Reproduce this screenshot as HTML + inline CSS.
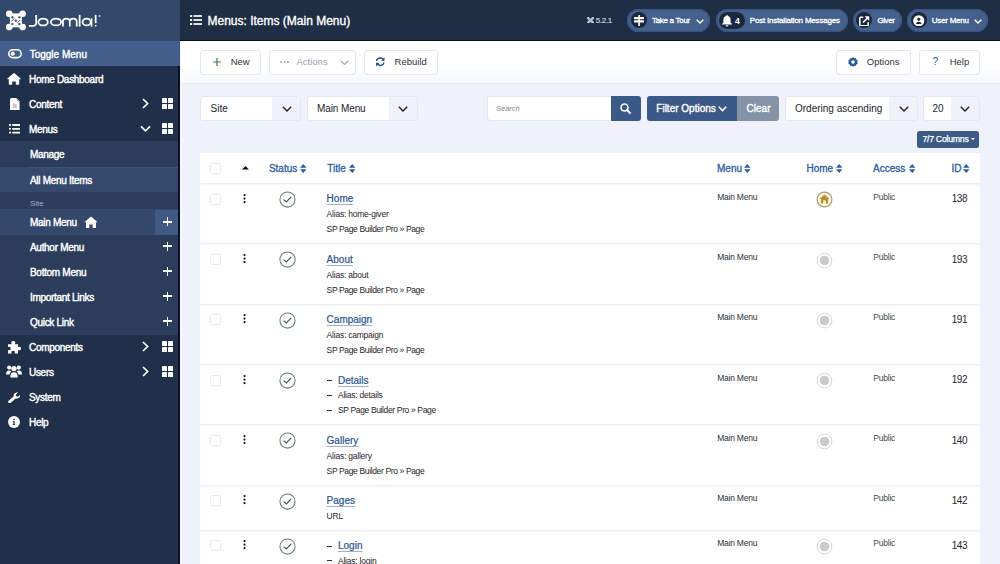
<!DOCTYPE html>
<html><head><meta charset="utf-8">
<style>
*{box-sizing:border-box;margin:0;padding:0}
html,body{width:1000px;height:564px;overflow:hidden;background:#eff2fb;font-family:"Liberation Sans",sans-serif;position:relative}
.abs{position:absolute}
.tx{position:absolute;white-space:nowrap;line-height:1}
#side{position:absolute;left:0;top:0;width:180px;height:564px;background:#21304a}
#sideborder{position:absolute;left:178px;top:66px;width:2px;height:498px;background:#0b1226}
#logo{position:absolute;left:0;top:0;width:180px;height:41px;background:#33496b}
#hdr{position:absolute;left:180px;top:0;width:820px;height:41px;background:#1f2d45;border-bottom:1px solid #0a101c}
.st{position:absolute;left:29px;white-space:nowrap;line-height:1;font-size:10px;letter-spacing:-0.3px;color:#fff;-webkit-text-stroke:0.4px #fff}
.plus{position:absolute;left:163px;width:9px;height:9px;margin-top:0.5px}
.plus:before,.plus:after{content:"";position:absolute;background:#fff}
.plus:before{left:3.6px;top:0;width:1.9px;height:9px}
.plus:after{left:0;top:3.6px;width:9px;height:1.9px}
.grid{position:absolute;left:162px;width:11px;height:11px}
.grid i{position:absolute;width:5px;height:5px;background:#fff;border-radius:.6px}
.chev{position:absolute;left:142px}
.btn{position:absolute;top:49.5px;height:25px;background:#fff;border:1px solid #e4e8ef;border-radius:3px}
.sel{position:absolute;top:96px;height:25px;background:#fff;border:1px solid #e3e7ef;border-radius:3px}
.sel .ar{position:absolute;right:0;top:0;bottom:0;width:28px;background:#eff2f9;border-radius:0 3px 3px 0}
.pill{position:absolute;top:9.3px;height:22.5px;border-radius:12px;background:#44608c;box-shadow:inset 0 0 0 1.2px #3a5480}
.pic{position:absolute;top:3.1px;left:3.5px;width:16px;height:16px;border-radius:50%;background:#1b273d}
.th{position:absolute;margin-top:0.7px;white-space:nowrap;line-height:1;font-size:10px;color:#2b5c9f;-webkit-text-stroke:0.3px #2b5c9f}
.cb{position:absolute;left:209.6px;width:11px;height:11px;border:1px solid #ebecef;border-radius:2px;background:#fff;margin-top:-0.4px}
.dot{position:absolute;left:0;width:2.2px;height:2.2px;background:#111;border-radius:50%}
.dash{width:5px;height:1.2px;background:#333}
</style></head><body>

<div id="side">
  <div id="logo">
    <svg class="abs" style="left:0;top:0" width="180" height="41" viewBox="0 0 180 41">
      <path d="M9 12.5 Q15.9 14.5 22.8 12.5 Q20.8 20.4 22.8 28.3 Q15.9 26.3 9 28.3 Q11 20.4 9 12.5 Z" fill="#fff"/>
      <g fill="#fff"><circle cx="9.2" cy="13.7" r="3.3"/><circle cx="22.6" cy="13.7" r="3.3"/><circle cx="9.2" cy="27.1" r="3.3"/><circle cx="22.6" cy="27.1" r="3.3"/></g>
      <g fill="#34496b"><ellipse cx="12.4" cy="17.3" rx="1.3" ry="1.1" transform="rotate(45 12.4 17.3)"/><ellipse cx="19.3" cy="17.3" rx="1.3" ry="1.1"/><ellipse cx="15.8" cy="20.6" rx="1.2" ry="1.2"/><ellipse cx="12.4" cy="24" rx="1.3" ry="1.1"/><ellipse cx="19.3" cy="24" rx="1.3" ry="1.1"/></g>
      <g fill="none" stroke="#34496b" stroke-width="0.7"><path d="M11.5 21.5 L14.8 18.2 M16.9 23.2 L20.2 19.9"/></g>
      <g fill="none" stroke="#fff" stroke-width="1.75" stroke-linecap="butt">
        <path d="M36.2 14.9 L36.2 22.4 Q36.2 25.9 32.7 25.9 L28.9 25.9"/>
        <ellipse cx="43.1" cy="22" rx="4.75" ry="3.45"/>
        <ellipse cx="56" cy="22" rx="5.1" ry="3.45"/>
        <path d="M62.9 26.6 L62.9 21.2 Q62.9 18.55 66.3 18.55 Q69.8 18.55 69.8 21.2 L69.8 26.6 M69.8 21.2 Q69.8 18.55 73.2 18.55 Q76.7 18.55 76.7 21.2 L76.7 26.6"/>
        <path d="M79.65 14.9 L79.65 26.6"/>
        <ellipse cx="86.6" cy="22" rx="4.1" ry="3.45"/>
        <path d="M91.5 18.2 L91.5 26.6"/>
        <path d="M95.65 14.9 L95.65 23.2"/>
      </g>
      <circle cx="95.65" cy="25.6" r="0.95" fill="#fff"/>
      <circle cx="99.6" cy="16" r="1.05" fill="#b9c4d6"/>
    </svg>
  </div>
  </div>

  <div class="abs" style="left:0;top:41px;width:179.5px;height:25px;background:#445f8b;border-right:1px solid #3b5581"></div>
  <svg class="abs" style="left:7.6px;top:49.2px" width="14" height="9.4" viewBox="0 0 14 9.4"><rect x="0.8" y="0.8" width="12.4" height="7.8" rx="3.9" fill="none" stroke="#fff" stroke-width="1.6"/><circle cx="4.7" cy="4.7" r="2.1" fill="#fff"/></svg>
  <div class="st" style="left:29.7px;top:49.70px;letter-spacing:0">Toggle Menu</div>

  <svg class="abs" style="left:7.4px;top:72.6px" width="14" height="12" viewBox="0 0 14 12"><path d="M7 0.2 Q7.4 0.2 7.8 0.6 L13.6 5.6 Q14 6.2 13.4 6.3 L12.2 6.3 L12.2 11 Q12.2 11.8 11.4 11.8 L8.8 11.8 L8.8 8.4 L5.2 8.4 L5.2 11.8 L2.6 11.8 Q1.8 11.8 1.8 11 L1.8 6.3 L0.6 6.3 Q0 6.2 0.4 5.6 L6.2 0.6 Q6.6 0.2 7 0.2 Z" fill="#fff"/></svg>
  <div class="st" style="top:74.80px">Home Dashboard</div>

  <svg class="abs" style="left:10px;top:97.6px" width="9.6" height="12.8" viewBox="0 0 9.6 12.8"><path d="M0 1.6 Q0 0 1.6 0 L6.4 0 L9.6 3.2 L9.6 11.2 Q9.6 12.8 8 12.8 L1.6 12.8 Q0 12.8 0 11.2 Z" fill="#fff"/><path d="M6.6 0.4 Q6.8 3 9.2 3.1" fill="none" stroke="#8d97a6" stroke-width="0.8"/><rect x="2.6" y="5.6" width="4.2" height="4.6" fill="#c5c9d0"/></svg>
  <div class="st" style="top:100.00px">Content</div>
  <svg class="chev" style="top:97.5px" width="7" height="11" viewBox="0 0 7 11"><path d="M1 1 L5.6 5.5 L1 10" fill="none" stroke="#fff" stroke-width="1.7"/></svg>
  <div class="grid" style="top:97.5px"><i style="left:0;top:0"></i><i style="left:6px;top:0"></i><i style="left:0;top:6px"></i><i style="left:6px;top:6px"></i></div>

  <svg class="abs" style="left:8.8px;top:124px" width="11.2" height="9.6" viewBox="0 0 11.2 9.6"><g fill="#fff"><circle cx="1" cy="1" r="1.05"/><circle cx="1" cy="4.8" r="1.05"/><circle cx="1" cy="8.6" r="1.05"/><rect x="3.2" y="0.1" width="8" height="1.8" rx=".5"/><rect x="3.2" y="3.9" width="8" height="1.8" rx=".5"/><rect x="3.2" y="7.7" width="8" height="1.8" rx=".5"/></g></svg>
  <div class="st" style="top:125.00px">Menus</div>
  <svg class="abs" style="left:139.5px;top:124.5px" width="11" height="8" viewBox="0 0 11 8"><path d="M1 1.3 L5.5 5.8 L10 1.3" fill="none" stroke="#fff" stroke-width="1.7"/></svg>
  <div class="grid" style="top:122.5px"><i style="left:0;top:0"></i><i style="left:6px;top:0"></i><i style="left:0;top:6px"></i><i style="left:6px;top:6px"></i></div>

  <div class="abs" style="left:0;top:141px;width:180px;height:194px;background:#2b3d5b"></div>
  <div class="st" style="left:30px;top:149.70px">Manage</div>
  <div class="abs" style="left:0;top:166.5px;width:180px;height:25.5px;background:#34496c"></div>
  <div class="abs" style="left:29px;top:166.5px;width:151px;height:1px;background:#3f5578"></div>
  <div class="st" style="left:30px;top:175.50px">All Menu Items</div>
  <div class="tx" style="left:30px;top:199.7px;font-size:8px;color:#a3aec2">Site</div>
  <div class="abs" style="left:0;top:209px;width:180px;height:25.7px;background:#33486b"></div>
  <div class="st" style="left:30px;top:217.60px">Main Menu</div>
  <svg class="abs" style="left:84px;top:215.5px" width="14" height="12.5" viewBox="0 0 15 13"><path d="M7.5 0.3 L14.7 6.6 L12.8 6.6 L12.8 12.7 L9.3 12.7 L9.3 8.8 L5.7 8.8 L5.7 12.7 L2.2 12.7 L2.2 6.6 L0.3 6.6 Z" fill="#fff"/></svg>
  <div class="abs" style="left:154.6px;top:209.5px;width:24px;height:25px;background:#405a84"></div>
  <div class="plus" style="top:216.6px"></div>
  <div class="st" style="left:30px;top:242.70px">Author Menu</div><div class="plus" style="top:241.3px"></div>
  <div class="st" style="left:30px;top:267.70px">Bottom Menu</div><div class="plus" style="top:266.3px"></div>
  <div class="st" style="left:30px;top:292.70px">Important Links</div><div class="plus" style="top:291.3px"></div>
  <div class="st" style="left:30px;top:317.70px">Quick Link</div><div class="plus" style="top:316.3px"></div>

  <svg class="abs" style="left:7px;top:340px" width="14" height="14" viewBox="0 0 14 14"><path d="M1 4.2 L4.6 4.2 Q3.6 1 6.3 1 Q9 1 8 4.2 L11 4.2 L11 7 Q14 6 14 8.5 Q14 11 11 10 L11 13.5 L7.6 13.5 Q8.6 10.8 6.1 10.8 Q3.6 10.8 4.6 13.5 L1 13.5 L1 10 Q3.8 11 3.8 8.5 Q3.8 6 1 7 Z" fill="#fff"/></svg>
  <div class="st" style="top:342.70px">Components</div>
  <svg class="chev" style="top:340.5px" width="7" height="11" viewBox="0 0 7 11"><path d="M1 1 L5.6 5.5 L1 10" fill="none" stroke="#fff" stroke-width="1.7"/></svg>
  <div class="grid" style="top:340.5px"><i style="left:0;top:0"></i><i style="left:6px;top:0"></i><i style="left:0;top:6px"></i><i style="left:6px;top:6px"></i></div>

  <svg class="abs" style="left:6px;top:365px" width="16" height="13" viewBox="0 0 16 13"><g fill="#fff"><circle cx="3.2" cy="2.6" r="2.1"/><circle cx="12.8" cy="2.6" r="2.1"/><circle cx="8" cy="3.6" r="2.7"/><path d="M0 9.5 Q0 5.6 3.2 5.6 Q4.6 5.6 5.2 6.4 Q3.6 7.6 3.6 9.5 Z"/><path d="M16 9.5 Q16 5.6 12.8 5.6 Q11.4 5.6 10.8 6.4 Q12.4 7.6 12.4 9.5 Z"/><path d="M4.2 12.5 Q4.2 7.2 8 7.2 Q11.8 7.2 11.8 12.5 Z"/></g></svg>
  <div class="st" style="top:367.70px">Users</div>
  <svg class="chev" style="top:365.5px" width="7" height="11" viewBox="0 0 7 11"><path d="M1 1 L5.6 5.5 L1 10" fill="none" stroke="#fff" stroke-width="1.7"/></svg>
  <div class="grid" style="top:365.5px"><i style="left:0;top:0"></i><i style="left:6px;top:0"></i><i style="left:0;top:6px"></i><i style="left:6px;top:6px"></i></div>

  <svg class="abs" style="left:8px;top:391.6px" width="12.4" height="11.4" viewBox="0 0 12.4 11.4"><path d="M1.6 9.8 L6.4 5.6" stroke="#fff" stroke-width="2.9" stroke-linecap="round"/><path d="M12.1 2.8 L9.9 4.7 L8.2 4.3 L7.8 2.7 L10 0.6 Q7.2 -0.2 6 2 Q5.2 3.8 6.2 5.6 L7.2 6.3 Q9.6 7 11.2 5.6 Q12.5 4.5 12.1 2.8 Z" fill="#fff"/></svg>
  <div class="st" style="top:392.70px">System</div>

  <svg class="abs" style="left:8.2px;top:416px" width="12" height="12" viewBox="0 0 12 12"><circle cx="6" cy="6" r="5.95" fill="#fff"/><rect x="5.35" y="5.2" width="1.3" height="3.6" fill="#21304a"/><rect x="4.8" y="8.2" width="2.4" height="0.8" fill="#21304a"/><rect x="4.8" y="5.2" width="1.4" height="0.7" fill="#21304a"/><circle cx="6" cy="3.5" r="0.85" fill="#21304a"/></svg>
  <div class="st" style="top:417.70px">Help</div>
</div>
<div id="sideborder"></div>

<div id="hdr">
  <svg class="abs" style="left:10px;top:15px" width="12" height="10" viewBox="0 0 12 10"><g fill="#fff"><rect x="0" y="0" width="2.2" height="2" rx=".5"/><rect x="0" y="4" width="2.2" height="2" rx=".5"/><rect x="0" y="8" width="2.2" height="2" rx=".5"/><rect x="3.5" y="0.15" width="8.5" height="1.7"/><rect x="3.5" y="4.15" width="8.5" height="1.7"/><rect x="3.5" y="8.15" width="8.5" height="1.7"/></g></svg>
  <div class="tx" style="left:27.5px;top:14.65px;font-size:12px;color:#fff;-webkit-text-stroke:0.35px #fff">Menus: Items (Main Menu)</div>
  <svg class="abs" style="left:406.6px;top:16.6px" width="7" height="6.8" viewBox="0 0 7 6.8"><path d="M1.2 1.2 Q3.5 2 5.8 1.2 Q5 3.4 5.8 5.6 Q3.5 4.8 1.2 5.6 Q2 3.4 1.2 1.2 Z" fill="#c9d1de"/><g fill="#c9d1de"><circle cx="1.3" cy="1.3" r="1.25"/><circle cx="5.7" cy="1.3" r="1.25"/><circle cx="1.3" cy="5.5" r="1.25"/><circle cx="5.7" cy="5.5" r="1.25"/></g><path d="M2.4 2.4 L4.6 4.4 M4.6 2.4 L2.4 4.4" stroke="#7d8aa0" stroke-width="0.7"/></svg>
  <div class="tx" style="left:415.7px;top:17.2px;font-size:8px;color:#c9d1de;letter-spacing:-0.3px;-webkit-text-stroke:0.2px currentColor">5.2.1</div>

  <div class="pill" style="left:447px;width:83px">
    <div class="pic"></div>
    <svg class="abs" style="left:6.5px;top:6.2px" width="10" height="11" viewBox="0 0 10 11"><g fill="#fff"><rect x="4.3" y="0" width="1.6" height="11"/><rect x="0" y="2" width="10" height="2.2" rx=".6"/><rect x="0" y="5.2" width="10" height="2.2" rx=".6"/></g></svg>
  </div>
  <div class="tx" style="left:472px;top:17.2px;font-size:8px;color:#fff;letter-spacing:-0.3px;-webkit-text-stroke:0.3px currentColor">Take a Tour</div>
  <svg class="abs" style="left:516px;top:18.5px" width="8" height="5" viewBox="0 0 8 5"><path d="M0.7 0.7 L4 4 L7.3 0.7" fill="none" stroke="#fff" stroke-width="1.4"/></svg>

  <div class="pill" style="left:535.5px;width:132.5px">
    <div class="abs" style="left:3.5px;top:3px;width:26px;height:17px;border-radius:9px;background:#1b273d"></div>
    <svg class="abs" style="left:6.5px;top:5.8px" width="10" height="11.5" viewBox="0 0 10 11.5"><path d="M5 0 Q5.8 0 5.8 0.9 Q8.6 1.5 8.6 4.6 L8.6 7.4 L10 9 L10 9.6 L0 9.6 L0 9 L1.4 7.4 L1.4 4.6 Q1.4 1.5 4.2 0.9 Q4.2 0 5 0 Z M3.6 10.2 L6.4 10.2 Q6.4 11.5 5 11.5 Q3.6 11.5 3.6 10.2 Z" fill="#fff"/></svg>
    <div class="tx" style="left:19.6px;top:7.4px;font-size:8.5px;color:#fff;font-weight:bold">4</div>
  </div>
  <div class="tx" style="left:569.8px;top:17.2px;font-size:8px;color:#fff;letter-spacing:-0.2px;-webkit-text-stroke:0.3px currentColor">Post Installation Messages</div>

  <div class="pill" style="left:672.6px;width:49.2px">
    <div class="pic"></div>
    <svg class="abs" style="left:6.5px;top:6.5px" width="10.5" height="10.5" viewBox="0 0 10.5 10.5"><path d="M4.2 1.3 L1.8 1.3 Q0.8 1.3 0.8 2.3 L0.8 8.7 Q0.8 9.7 1.8 9.7 L8.2 9.7 Q9.2 9.7 9.2 8.7 L9.2 6.3" fill="none" stroke="#fff" stroke-width="1.6"/><path d="M4 6.5 L9.2 1.3" stroke="#fff" stroke-width="1.6"/><path d="M5.6 0.3 L10.2 0.3 L10.2 4.9 Z" fill="#fff"/></svg>
  </div>
  <div class="tx" style="left:697.5px;top:17.2px;font-size:8px;color:#fff;letter-spacing:-0.45px;-webkit-text-stroke:0.3px currentColor">Giver</div>

  <div class="pill" style="left:727px;width:81px">
    <div class="pic"></div>
    <svg class="abs" style="left:6px;top:5.7px" width="11.5" height="11.5" viewBox="0 0 11.5 11.5"><circle cx="5.75" cy="5.75" r="5.6" fill="#fff"/><circle cx="5.75" cy="4.3" r="1.5" fill="#1b273d"/><path d="M2.9 8.9 Q3.4 6.8 5.75 6.8 Q8.1 6.8 8.6 8.9 Z" fill="#1b273d"/></svg>
  </div>
  <div class="tx" style="left:751.8px;top:17.2px;font-size:8px;color:#fff;letter-spacing:-0.25px;-webkit-text-stroke:0.3px currentColor">User Menu</div>
  <svg class="abs" style="left:793.5px;top:18.5px" width="8" height="5" viewBox="0 0 8 5"><path d="M0.7 0.7 L4 4 L7.3 0.7" fill="none" stroke="#fff" stroke-width="1.4"/></svg>
</div>

<div class="abs" style="left:180px;top:41px;width:820px;height:42px;background:linear-gradient(#ffffff 0%,#ffffff 55%,#f6f8fc 100%)"></div>
<div class="abs" style="left:180px;top:83px;width:820px;height:1px;background:#e9ecf3"></div><div class="abs" style="left:180px;top:84px;width:2px;height:480px;background:#f7f8fc"></div>

<div class="btn" style="left:200px;width:60.5px"></div>
<svg class="abs" style="left:212.5px;top:57.8px" width="8" height="8" viewBox="0 0 8 8"><path d="M4 0 L4 8 M0 4 L8 4" stroke="#3f7a4e" stroke-width="1.2"/></svg>
<div class="tx" style="left:230.7px;top:56.95px;font-size:9.5px;color:#2f3338">New</div>

<div class="btn" style="left:268.5px;width:87px"></div>
<svg class="abs" style="left:280.3px;top:61px" width="9" height="2" viewBox="0 0 9 2"><g fill="#9ca2aa"><circle cx="1" cy="1" r="1"/><circle cx="4.5" cy="1" r="1"/><circle cx="8" cy="1" r="1"/></g></svg>
<div class="tx" style="left:296.5px;top:57.25px;font-size:9.5px;color:#9ea4ab">Actions</div>
<svg class="abs" style="left:339.7px;top:60px" width="9" height="5" viewBox="0 0 9 5"><path d="M0.6 0.6 L4.5 4.4 L8.4 0.6" fill="none" stroke="#9ea4ab" stroke-width="1.2"/></svg>

<div class="btn" style="left:364px;width:73.5px"></div>
<svg class="abs" style="left:375px;top:57px" width="10.5" height="9.5" viewBox="0 0 10.5 9.5"><path d="M1.5 4 Q2 1 5.2 1 Q7.5 1 8.6 2.8" fill="none" stroke="#234a86" stroke-width="1.35"/><path d="M9.5 0.2 L9.5 3.8 L6 3.8 Z" fill="#234a86"/><path d="M9 5.5 Q8.5 8.5 5.3 8.5 Q3 8.5 1.9 6.7" fill="none" stroke="#234a86" stroke-width="1.35"/><path d="M1 9.3 L1 5.7 L4.5 5.7 Z" fill="#234a86"/></svg>
<div class="tx" style="left:394.6px;top:57.25px;font-size:9.5px;color:#2f3338">Rebuild</div>

<div class="btn" style="left:836.4px;width:75px"></div>
<svg class="abs" style="left:847.8px;top:56.8px" width="10" height="10" viewBox="0 0 10 10"><path d="M5 0 L6.1 1.3 L7.7 0.9 L8.1 2.5 L9.7 3 L9.2 4.6 L10 5 L9.2 5.5 L9.7 7 L8.1 7.5 L7.7 9.1 L6.1 8.7 L5 10 L3.9 8.7 L2.3 9.1 L1.9 7.5 L0.3 7 L0.8 5.5 L0 5 L0.8 4.5 L0.3 3 L1.9 2.5 L2.3 0.9 L3.9 1.3 Z" fill="#2b5a9c"/><circle cx="5" cy="5" r="1.8" fill="#fff"/></svg>
<div class="tx" style="left:866.8px;top:56.95px;font-size:9.5px;color:#2f3338">Options</div>

<div class="btn" style="left:918.8px;width:61px"></div>
<div class="tx" style="left:932.5px;top:56.95px;font-size:10px;color:#2b5a9c">?</div>
<div class="tx" style="left:949.7px;top:56.95px;font-size:9.5px;color:#2f3338">Help</div>

<div class="sel" style="left:200px;width:101px"><div class="ar"></div></div>
<div class="tx" style="left:210.6px;top:103.5px;font-size:10px;color:#22262a">Site</div>
<svg class="abs" style="left:282px;top:105.5px" width="10" height="6" viewBox="0 0 10 6"><path d="M0.8 0.8 L5 5 L9.2 0.8" fill="none" stroke="#222" stroke-width="1.4"/></svg>
<div class="sel" style="left:306.5px;width:111px"><div class="ar"></div></div>
<div class="tx" style="left:317px;top:103.5px;font-size:10px;color:#22262a;letter-spacing:-0.1px">Main Menu</div>
<svg class="abs" style="left:398px;top:105.5px" width="10" height="6" viewBox="0 0 10 6"><path d="M0.8 0.8 L5 5 L9.2 0.8" fill="none" stroke="#222" stroke-width="1.4"/></svg>

<div class="abs" style="left:486.8px;top:96.2px;width:124px;height:25px;background:#fff;border:1px solid #e3e7ef;border-right:none;border-radius:3px 0 0 3px"></div>
<div class="tx" style="left:496px;top:105px;font-size:7.5px;color:#7d848c;font-style:italic">Search</div>
<div class="abs" style="left:610.5px;top:96.2px;width:30px;height:25px;background:#3c5a87;border-radius:0 3px 3px 0"></div>
<svg class="abs" style="left:620px;top:103px" width="11" height="11" viewBox="0 0 11 11"><circle cx="4.5" cy="4.5" r="3.5" fill="none" stroke="#fff" stroke-width="1.6"/><path d="M7 7 L10 10" stroke="#fff" stroke-width="1.8" stroke-linecap="round"/></svg>
<div class="abs" style="left:646.5px;top:96.2px;width:90.5px;height:25px;background:#3c5a87;border-radius:3px 0 0 3px"></div>
<div class="tx" style="left:656.3px;top:103.6px;font-size:10px;color:#fff;-webkit-text-stroke:0.35px #fff">Filter Options</div>
<svg class="abs" style="left:718.3px;top:105.6px" width="9" height="6" viewBox="0 0 9 6"><path d="M0.8 0.8 L4.5 4.6 L8.2 0.8" fill="none" stroke="#fff" stroke-width="1.5"/></svg>
<div class="abs" style="left:737px;top:96.2px;width:42px;height:25px;background:#8592a7;border-radius:0 3px 3px 0"></div>
<div class="tx" style="left:746.6px;top:103.6px;font-size:10px;color:#fff;-webkit-text-stroke:0.35px #fff">Clear</div>

<div class="sel" style="left:784.8px;width:133px"><div class="ar" style="width:27.5px"></div></div>
<div class="tx" style="left:795px;top:103.6px;font-size:10px;color:#22262a">Ordering ascending</div>
<svg class="abs" style="left:898.5px;top:105.5px" width="10" height="6" viewBox="0 0 10 6"><path d="M0.8 0.8 L5 5 L9.2 0.8" fill="none" stroke="#222" stroke-width="1.4"/></svg>
<div class="sel" style="left:922.6px;width:57px"><div class="ar" style="width:28px"></div></div>
<div class="tx" style="left:932.5px;top:103.5px;font-size:10px;color:#22262a">20</div>
<svg class="abs" style="left:960px;top:105.5px" width="10" height="6" viewBox="0 0 10 6"><path d="M0.8 0.8 L5 5 L9.2 0.8" fill="none" stroke="#222" stroke-width="1.4"/></svg>

<div class="abs" style="left:917.2px;top:131px;width:62px;height:17.2px;background:#3d5a87;border-radius:2.5px"></div>
<div class="tx" style="left:922.4px;top:134.9px;font-size:8.8px;color:#fff;letter-spacing:-0.3px;-webkit-text-stroke:0.25px #fff">7/7 Columns</div>
<svg class="abs" style="left:971px;top:138.2px" width="4" height="3" viewBox="0 0 4 3"><path d="M0 0 L4 0 L2 2.2 Z" fill="#fff"/></svg>

<div class="abs" style="left:200px;top:153px;width:780px;height:411px;background:#fff"></div>
<div class="cb" style="top:163.4px"></div>
<svg class="abs" style="left:242.3px;top:166px" width="7" height="4" viewBox="0 0 7 4"><path d="M0 3.6 L3.5 0 L7 3.6 Z" fill="#111"/></svg>
<div class="th" style="left:268.9px;top:163.3px">Status</div>
<svg class="abs" style="left:300px;top:163.7px" width="6.5" height="9" viewBox="0 0 6.5 9"><path d="M0 3.8 L3.25 0 L6.5 3.8 Z M0 5.2 L3.25 9 L6.5 5.2 Z" fill="#2b5c9f"/></svg>
<div class="th" style="left:327.3px;top:163.3px">Title</div>
<svg class="abs" style="left:348.7px;top:163.7px" width="6.5" height="9" viewBox="0 0 6.5 9"><path d="M0 3.8 L3.25 0 L6.5 3.8 Z M0 5.2 L3.25 9 L6.5 5.2 Z" fill="#2b5c9f"/></svg>
<div class="th" style="left:717px;top:163.3px">Menu</div>
<svg class="abs" style="left:744px;top:163.7px" width="6.5" height="9" viewBox="0 0 6.5 9"><path d="M0 3.8 L3.25 0 L6.5 3.8 Z M0 5.2 L3.25 9 L6.5 5.2 Z" fill="#2b5c9f"/></svg>
<div class="th" style="left:806.5px;top:163.3px">Home</div>
<svg class="abs" style="left:835.5px;top:163.7px" width="6.5" height="9" viewBox="0 0 6.5 9"><path d="M0 3.8 L3.25 0 L6.5 3.8 Z M0 5.2 L3.25 9 L6.5 5.2 Z" fill="#2b5c9f"/></svg>
<div class="th" style="left:873px;top:163.3px">Access</div>
<svg class="abs" style="left:908.5px;top:163.7px" width="6.5" height="9" viewBox="0 0 6.5 9"><path d="M0 3.8 L3.25 0 L6.5 3.8 Z M0 5.2 L3.25 9 L6.5 5.2 Z" fill="#2b5c9f"/></svg>
<div class="th" style="left:951.4px;top:163.3px">ID</div>
<svg class="abs" style="left:963px;top:163.7px" width="6.5" height="9" viewBox="0 0 6.5 9"><path d="M0 3.8 L3.25 0 L6.5 3.8 Z M0 5.2 L3.25 9 L6.5 5.2 Z" fill="#2b5c9f"/></svg>

<div class="abs" style="left:200px;top:183px;width:780px;height:1px;background:#efeff1"></div><div class="abs" style="left:200px;top:184px;width:780px;height:1px;background:#f7f7f8"></div>
<div class="cb" style="top:194.0px"></div>
<svg class="abs" style="left:243px;top:193.5px" width="3" height="10" viewBox="0 0 3 10"><g fill="#111"><circle cx="1.5" cy="1.1" r="1.05"/><circle cx="1.5" cy="4.6" r="1.05"/><circle cx="1.5" cy="8.1" r="1.05"/></g></svg>
<svg class="abs" style="left:279px;top:191.0px" width="17" height="17" viewBox="0 0 17 17"><circle cx="8.5" cy="8.5" r="7.6" fill="none" stroke="#67836f" stroke-width="1.05"/><path d="M4.6 8.6 L7.3 11 L12.2 5.9" fill="none" stroke="#37603f" stroke-width="1.2"/></svg>
<div class="tx" style="left:326.6px;top:194.44px;font-size:10px;color:#29528f;text-decoration:underline;text-underline-offset:1.5px;text-decoration-color:#9db1d0;-webkit-text-stroke:0.2px #29528f">Home</div>
<div class="tx" style="left:326.6px;top:210.30px;font-size:8.5px;color:#1f2328;letter-spacing:-0.22px">Alias: home-giver</div>
<div class="tx" style="left:326.6px;top:225.30px;font-size:8.5px;color:#1f2328;letter-spacing:-0.36px">SP Page Builder Pro » Page</div>
<div class="tx" style="left:717.2px;top:192.60px;font-size:8.5px;color:#2d3135;letter-spacing:-0.22px">Main Menu</div>
<div class="tx" style="left:873.2px;top:192.60px;font-size:8.5px;color:#45494e;letter-spacing:-0.2px">Public</div>
<div class="tx" style="left:951.8px;top:194.23px;font-size:10px;color:#22262a;letter-spacing:-0.5px">138</div>
<svg class="abs" style="left:815.6px;top:191.1px" width="17" height="17" viewBox="0 0 17 17"><circle cx="8.5" cy="8.5" r="7.4" fill="#fffdf6" stroke="#b59a62" stroke-width="1.15"/><path d="M8.5 3.4 L13.6 7.9 L12.2 7.9 L12.2 12.6 L9.9 12.6 L9.9 9.6 L7.1 9.6 L7.1 12.6 L4.8 12.6 L4.8 7.9 L3.4 7.9 Z" fill="#c18d24"/></svg>
<div class="abs" style="left:200px;top:243px;width:780px;height:1px;background:#efeff1"></div><div class="abs" style="left:200px;top:244px;width:780px;height:1px;background:#f7f7f8"></div>
<div class="cb" style="top:254.4px"></div>
<svg class="abs" style="left:243px;top:253.9px" width="3" height="10" viewBox="0 0 3 10"><g fill="#111"><circle cx="1.5" cy="1.1" r="1.05"/><circle cx="1.5" cy="4.6" r="1.05"/><circle cx="1.5" cy="8.1" r="1.05"/></g></svg>
<svg class="abs" style="left:279px;top:251.4px" width="17" height="17" viewBox="0 0 17 17"><circle cx="8.5" cy="8.5" r="7.6" fill="none" stroke="#67836f" stroke-width="1.05"/><path d="M4.6 8.6 L7.3 11 L12.2 5.9" fill="none" stroke="#37603f" stroke-width="1.2"/></svg>
<div class="tx" style="left:326.6px;top:254.84px;font-size:10px;color:#29528f;text-decoration:underline;text-underline-offset:1.5px;text-decoration-color:#9db1d0;-webkit-text-stroke:0.2px #29528f">About</div>
<div class="tx" style="left:326.6px;top:270.70px;font-size:8.5px;color:#1f2328;letter-spacing:-0.22px">Alias: about</div>
<div class="tx" style="left:326.6px;top:285.70px;font-size:8.5px;color:#1f2328;letter-spacing:-0.36px">SP Page Builder Pro » Page</div>
<div class="tx" style="left:717.2px;top:253.00px;font-size:8.5px;color:#2d3135;letter-spacing:-0.22px">Main Menu</div>
<div class="tx" style="left:873.2px;top:253.00px;font-size:8.5px;color:#45494e;letter-spacing:-0.2px">Public</div>
<div class="tx" style="left:951.8px;top:254.64px;font-size:10px;color:#22262a;letter-spacing:-0.5px">193</div>
<svg class="abs" style="left:815.6px;top:251.5px" width="17" height="17" viewBox="0 0 17 17"><circle cx="8.5" cy="8.5" r="7.4" fill="#fff" stroke="#d5d5d5" stroke-width="1"/><circle cx="8.5" cy="8.5" r="4.8" fill="#cbcbcb"/></svg>
<div class="abs" style="left:200px;top:304px;width:780px;height:1px;background:#efeff1"></div><div class="abs" style="left:200px;top:305px;width:780px;height:1px;background:#f7f7f8"></div>
<div class="cb" style="top:314.7px"></div>
<svg class="abs" style="left:243px;top:314.2px" width="3" height="10" viewBox="0 0 3 10"><g fill="#111"><circle cx="1.5" cy="1.1" r="1.05"/><circle cx="1.5" cy="4.6" r="1.05"/><circle cx="1.5" cy="8.1" r="1.05"/></g></svg>
<svg class="abs" style="left:279px;top:311.7px" width="17" height="17" viewBox="0 0 17 17"><circle cx="8.5" cy="8.5" r="7.6" fill="none" stroke="#67836f" stroke-width="1.05"/><path d="M4.6 8.6 L7.3 11 L12.2 5.9" fill="none" stroke="#37603f" stroke-width="1.2"/></svg>
<div class="tx" style="left:326.6px;top:315.13px;font-size:10px;color:#29528f;text-decoration:underline;text-underline-offset:1.5px;text-decoration-color:#9db1d0;-webkit-text-stroke:0.2px #29528f">Campaign</div>
<div class="tx" style="left:326.6px;top:331.00px;font-size:8.5px;color:#1f2328;letter-spacing:-0.22px">Alias: campaign</div>
<div class="tx" style="left:326.6px;top:346.00px;font-size:8.5px;color:#1f2328;letter-spacing:-0.36px">SP Page Builder Pro » Page</div>
<div class="tx" style="left:717.2px;top:313.30px;font-size:8.5px;color:#2d3135;letter-spacing:-0.22px">Main Menu</div>
<div class="tx" style="left:873.2px;top:313.30px;font-size:8.5px;color:#45494e;letter-spacing:-0.2px">Public</div>
<div class="tx" style="left:951.8px;top:314.94px;font-size:10px;color:#22262a;letter-spacing:-0.5px">191</div>
<svg class="abs" style="left:815.6px;top:311.8px" width="17" height="17" viewBox="0 0 17 17"><circle cx="8.5" cy="8.5" r="7.4" fill="#fff" stroke="#d5d5d5" stroke-width="1"/><circle cx="8.5" cy="8.5" r="4.8" fill="#cbcbcb"/></svg>
<div class="abs" style="left:200px;top:364px;width:780px;height:1px;background:#efeff1"></div><div class="abs" style="left:200px;top:365px;width:780px;height:1px;background:#f7f7f8"></div>
<div class="cb" style="top:375.1px"></div>
<svg class="abs" style="left:243px;top:374.6px" width="3" height="10" viewBox="0 0 3 10"><g fill="#111"><circle cx="1.5" cy="1.1" r="1.05"/><circle cx="1.5" cy="4.6" r="1.05"/><circle cx="1.5" cy="8.1" r="1.05"/></g></svg>
<svg class="abs" style="left:279px;top:372.1px" width="17" height="17" viewBox="0 0 17 17"><circle cx="8.5" cy="8.5" r="7.6" fill="none" stroke="#67836f" stroke-width="1.05"/><path d="M4.6 8.6 L7.3 11 L12.2 5.9" fill="none" stroke="#37603f" stroke-width="1.2"/></svg>
<div class="abs dash" style="left:327px;top:380px"></div>
<div class="tx" style="left:338px;top:375.54px;font-size:10px;color:#29528f;text-decoration:underline;text-underline-offset:1.5px;text-decoration-color:#9db1d0;-webkit-text-stroke:0.2px #29528f">Details</div>
<div class="abs dash" style="left:327px;top:395px"></div>
<div class="tx" style="left:338px;top:391.40px;font-size:8.5px;color:#1f2328;letter-spacing:-0.22px">Alias: details</div>
<div class="abs dash" style="left:327px;top:410px"></div>
<div class="tx" style="left:338px;top:406.40px;font-size:8.5px;color:#1f2328;letter-spacing:-0.36px">SP Page Builder Pro » Page</div>
<div class="tx" style="left:717.2px;top:373.70px;font-size:8.5px;color:#2d3135;letter-spacing:-0.22px">Main Menu</div>
<div class="tx" style="left:873.2px;top:373.70px;font-size:8.5px;color:#45494e;letter-spacing:-0.2px">Public</div>
<div class="tx" style="left:951.8px;top:375.34px;font-size:10px;color:#22262a;letter-spacing:-0.5px">192</div>
<svg class="abs" style="left:815.6px;top:372.2px" width="17" height="17" viewBox="0 0 17 17"><circle cx="8.5" cy="8.5" r="7.4" fill="#fff" stroke="#d5d5d5" stroke-width="1"/><circle cx="8.5" cy="8.5" r="4.8" fill="#cbcbcb"/></svg>
<div class="abs" style="left:200px;top:424px;width:780px;height:1px;background:#efeff1"></div><div class="abs" style="left:200px;top:425px;width:780px;height:1px;background:#f7f7f8"></div>
<div class="cb" style="top:435.4px"></div>
<svg class="abs" style="left:243px;top:434.9px" width="3" height="10" viewBox="0 0 3 10"><g fill="#111"><circle cx="1.5" cy="1.1" r="1.05"/><circle cx="1.5" cy="4.6" r="1.05"/><circle cx="1.5" cy="8.1" r="1.05"/></g></svg>
<svg class="abs" style="left:279px;top:432.4px" width="17" height="17" viewBox="0 0 17 17"><circle cx="8.5" cy="8.5" r="7.6" fill="none" stroke="#67836f" stroke-width="1.05"/><path d="M4.6 8.6 L7.3 11 L12.2 5.9" fill="none" stroke="#37603f" stroke-width="1.2"/></svg>
<div class="tx" style="left:326.6px;top:435.83px;font-size:10px;color:#29528f;text-decoration:underline;text-underline-offset:1.5px;text-decoration-color:#9db1d0;-webkit-text-stroke:0.2px #29528f">Gallery</div>
<div class="tx" style="left:326.6px;top:451.70px;font-size:8.5px;color:#1f2328;letter-spacing:-0.22px">Alias: gallery</div>
<div class="tx" style="left:326.6px;top:466.70px;font-size:8.5px;color:#1f2328;letter-spacing:-0.36px">SP Page Builder Pro » Page</div>
<div class="tx" style="left:717.2px;top:434.00px;font-size:8.5px;color:#2d3135;letter-spacing:-0.22px">Main Menu</div>
<div class="tx" style="left:873.2px;top:434.00px;font-size:8.5px;color:#45494e;letter-spacing:-0.2px">Public</div>
<div class="tx" style="left:951.8px;top:435.63px;font-size:10px;color:#22262a;letter-spacing:-0.5px">140</div>
<svg class="abs" style="left:815.6px;top:432.5px" width="17" height="17" viewBox="0 0 17 17"><circle cx="8.5" cy="8.5" r="7.4" fill="#fff" stroke="#d5d5d5" stroke-width="1"/><circle cx="8.5" cy="8.5" r="4.8" fill="#cbcbcb"/></svg>
<div class="abs" style="left:200px;top:485px;width:780px;height:1px;background:#efeff1"></div><div class="abs" style="left:200px;top:486px;width:780px;height:1px;background:#f7f7f8"></div>
<div class="cb" style="top:495.8px"></div>
<svg class="abs" style="left:243px;top:495.3px" width="3" height="10" viewBox="0 0 3 10"><g fill="#111"><circle cx="1.5" cy="1.1" r="1.05"/><circle cx="1.5" cy="4.6" r="1.05"/><circle cx="1.5" cy="8.1" r="1.05"/></g></svg>
<svg class="abs" style="left:279px;top:492.8px" width="17" height="17" viewBox="0 0 17 17"><circle cx="8.5" cy="8.5" r="7.6" fill="none" stroke="#67836f" stroke-width="1.05"/><path d="M4.6 8.6 L7.3 11 L12.2 5.9" fill="none" stroke="#37603f" stroke-width="1.2"/></svg>
<div class="tx" style="left:326.6px;top:496.24px;font-size:10px;color:#29528f;text-decoration:underline;text-underline-offset:1.5px;text-decoration-color:#9db1d0;-webkit-text-stroke:0.2px #29528f">Pages</div>
<div class="tx" style="left:326.6px;top:512.10px;font-size:8.5px;color:#1f2328;letter-spacing:-0.22px">URL</div>
<div class="tx" style="left:717.2px;top:494.40px;font-size:8.5px;color:#2d3135;letter-spacing:-0.22px">Main Menu</div>
<div class="tx" style="left:873.2px;top:494.40px;font-size:8.5px;color:#45494e;letter-spacing:-0.2px">Public</div>
<div class="tx" style="left:951.8px;top:496.04px;font-size:10px;color:#22262a;letter-spacing:-0.5px">142</div>
<div class="abs" style="left:200px;top:530px;width:780px;height:1px;background:#efeff1"></div><div class="abs" style="left:200px;top:531px;width:780px;height:1px;background:#f7f7f8"></div>
<div class="cb" style="top:540.7px"></div>
<svg class="abs" style="left:243px;top:540.2px" width="3" height="10" viewBox="0 0 3 10"><g fill="#111"><circle cx="1.5" cy="1.1" r="1.05"/><circle cx="1.5" cy="4.6" r="1.05"/><circle cx="1.5" cy="8.1" r="1.05"/></g></svg>
<svg class="abs" style="left:279px;top:537.7px" width="17" height="17" viewBox="0 0 17 17"><circle cx="8.5" cy="8.5" r="7.6" fill="none" stroke="#67836f" stroke-width="1.05"/><path d="M4.6 8.6 L7.3 11 L12.2 5.9" fill="none" stroke="#37603f" stroke-width="1.2"/></svg>
<div class="abs dash" style="left:327px;top:546px"></div>
<div class="tx" style="left:338px;top:541.13px;font-size:10px;color:#29528f;text-decoration:underline;text-underline-offset:1.5px;text-decoration-color:#9db1d0;-webkit-text-stroke:0.2px #29528f">Login</div>
<div class="abs dash" style="left:327px;top:560px"></div>
<div class="tx" style="left:338px;top:557.00px;font-size:8.5px;color:#1f2328;letter-spacing:-0.22px">Alias: login</div>
<div class="abs dash" style="left:327px;top:575px"></div>
<div class="tx" style="left:338px;top:572.00px;font-size:8.5px;color:#1f2328;letter-spacing:-0.36px">SP Page Builder Pro » Page</div>
<div class="tx" style="left:717.2px;top:539.30px;font-size:8.5px;color:#2d3135;letter-spacing:-0.22px">Main Menu</div>
<div class="tx" style="left:873.2px;top:539.30px;font-size:8.5px;color:#45494e;letter-spacing:-0.2px">Public</div>
<div class="tx" style="left:951.8px;top:540.94px;font-size:10px;color:#22262a;letter-spacing:-0.5px">143</div>
<svg class="abs" style="left:815.6px;top:537.8px" width="17" height="17" viewBox="0 0 17 17"><circle cx="8.5" cy="8.5" r="7.4" fill="#fff" stroke="#d5d5d5" stroke-width="1"/><circle cx="8.5" cy="8.5" r="4.8" fill="#cbcbcb"/></svg>
</body></html>
